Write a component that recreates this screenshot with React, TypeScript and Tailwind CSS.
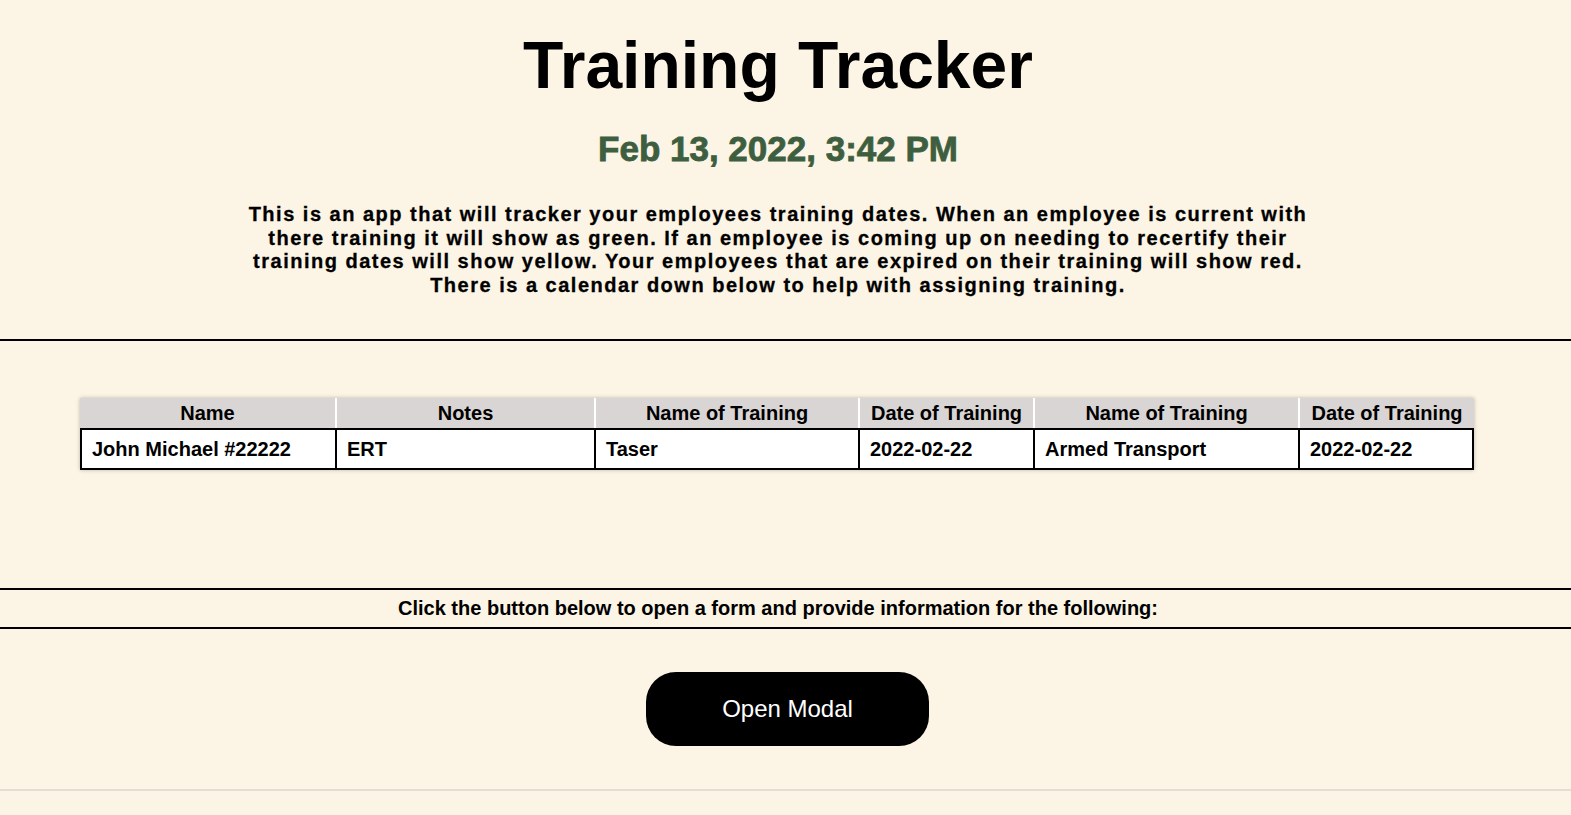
import React from "react";

const headers = ["Name", "Notes", "Name of Training", "Date of Training", "Name of Training", "Date of Training"];
const row = ["John Michael #22222", "ERT", "Taser", "2022-02-22", "Armed Transport", "2022-02-22"];
const headW = ["w-[255px]", "w-[257px]", "w-[262px]", "w-[173px]", "w-[263px]", "w-[174px]"];
const bodyW = ["w-[253px]", "w-[259px]", "w-[264px]", "w-[175px]", "w-[265px]", "w-[174px]"];

export default function App() {
  return (
    <div className="min-h-[815px] bg-[#fcf4e5] text-black [font-family:'Liberation_Sans',Arial,sans-serif]">
      <div className="pr-[15px] pt-[28px] text-center">
        <h1 className="text-[66px] font-bold leading-[1.15]">Training Tracker</h1>
        <div className="mt-[25px] text-[35px] font-bold leading-[1.15] text-[#3e5e40] [-webkit-text-stroke:0.8px_#3e5e40]">
          Feb 13, 2022, 3:42 PM
        </div>
        <p className="mx-auto mt-[34px] w-[1080px] text-[20px] font-bold leading-[23.5px] tracking-[1.5px] [-webkit-text-stroke:0.3px_#000]">
          This is an app that will tracker your employees training dates. When an employee is current with there training it will show as green. If an employee is coming up on needing to recertify their training dates will show yellow. Your employees that are expired on their training will show red. There is a calendar down below to help with assigning training.
        </p>
      </div>
      <div className="mt-[42px] h-[2px] bg-black" />
      <div className="pl-[80px] pt-[57px]">
        <div className="flex w-fit flex-col shadow-[0_0_4px_rgba(0,0,0,0.25)]">
          <div className="flex gap-[2px] bg-white">
            {headers.map((h, i) => (
              <div
                key={i}
                className={`${headW[i]} h-[30px] bg-[#d9d5d4] text-center text-[20px] font-bold leading-[30px]`}
              >
                {h}
              </div>
            ))}
          </div>
          <div className="flex border-2 border-black bg-white">
            {row.map((c, i) => (
              <div
                key={i}
                className={`${bodyW[i]} ${i > 0 ? "border-l-2 border-black" : ""} h-[38px] pl-[10px] text-[20px] font-bold leading-[38px]`}
              >
                {c}
              </div>
            ))}
          </div>
        </div>
      </div>
      <div className="mt-[118px] border-t-2 border-b-2 border-black py-[6px] pr-[15px] text-center text-[20px] font-bold leading-[25px]">
        Click the button below to open a form and provide information for the following:
      </div>
      <div className="flex justify-center pl-[4px] pt-[43px]">
        <button className="h-[74px] w-[283px] rounded-[30px] bg-black text-[24px] text-white">Open Modal</button>
      </div>
      <div className="mt-[43px] h-[2px] bg-[#e4ddd4]" />
    </div>
  );
}
